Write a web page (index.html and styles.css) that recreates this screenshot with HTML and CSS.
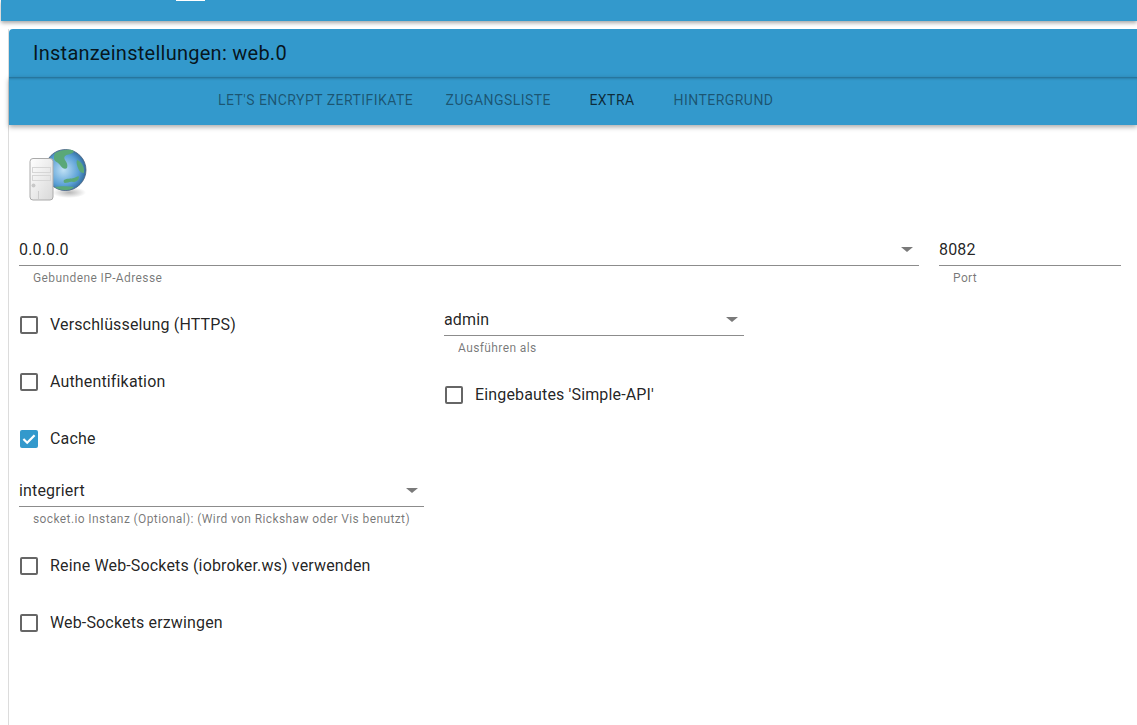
FILE: index.html
```html
<!DOCTYPE html>
<html lang="de">
<head>
<meta charset="utf-8">
<title>Instanzeinstellungen: web.0</title>
<link rel="stylesheet" href="styles.css">
</head>
<body>
<header class="topbar"><span class="topbar-mark"></span></header>
<main class="dialog">
  <div class="title">Instanzeinstellungen: web.0</div>
  <nav class="tabs">
    <span class="tab tab-a">LET'S ENCRYPT ZERTIFIKATE</span>
    <span class="tab tab-b">ZUGANGSLISTE</span>
    <span class="tab tab-c active">EXTRA</span>
    <span class="tab tab-d">HINTERGRUND</span>
  </nav>
  <section class="content">
    <svg class="logo" width="70" height="60" viewBox="0 0 70 60" aria-hidden="true">
      <defs>
        <radialGradient id="globe" cx="0.45" cy="0.5" r="0.58">
          <stop offset="0" stop-color="#bfe0f5"/>
          <stop offset="0.65" stop-color="#5aa0d6"/>
          <stop offset="1" stop-color="#2c6496"/>
        </radialGradient>
        <radialGradient id="shade" cx="0.5" cy="0.5" r="0.5">
          <stop offset="0" stop-color="#000" stop-opacity="0.28"/>
          <stop offset="1" stop-color="#000" stop-opacity="0"/>
        </radialGradient>
        <linearGradient id="case" x1="0" y1="0" x2="1" y2="1">
          <stop offset="0" stop-color="#ffffff"/>
          <stop offset="1" stop-color="#d8d8d8"/>
        </linearGradient>
      </defs>
      <ellipse cx="50" cy="45.500" rx="17" ry="5.500" fill="url(#shade)"/>
      <circle cx="46.500" cy="23" r="20.500" fill="url(#globe)" stroke="#47617e" stroke-width="0.8"/>
      <path d="M36 6c5-3 12-4 17-3 3 1 2 3-2 4-4 1-7 2-5 6 2 3 3 5 2 8-2 2-5 0-7-3-2-3-5-3-6-6 0-2 0-4 1-6z" fill="#5aa878"/>
      <path d="M58 13c3 1 6 4 7 9l0 4c-3 0-5-2-6-5-1-3-2-5-1-8zM45 33c3-2 7-1 10-2 2-1 5-3 5-1 0 3-3 5-6 5-3-1-5 1-8 1-1 0-2-2-1-3zM36 40c5-1 13-1 19 0-3 3-6 3-10 3-4 0-7-1-9-3z" fill="#5aa878"/>
      <rect x="11" y="11.500" width="23" height="41.500" rx="3" fill="url(#case)" stroke="#aaaaaa"/>
      <rect x="13.500" y="20.500" width="18" height="5" fill="none" stroke="#d6d6d6"/>
      <rect x="13.500" y="28.500" width="18" height="5" fill="none" stroke="#d6d6d6"/>
      <circle cx="14.500" cy="38.500" r="2" fill="#c8c8c8"/>
      <path d="M19.500 44v8" stroke="#cccccc"/>
    </svg>

    <div class="row-ip">
      <div class="field field-ip">
        <div class="input"><span>0.0.0.0</span><i class="caret"></i></div>
        <div class="hint">Gebundene IP-Adresse</div>
      </div>
      <div class="field field-port">
        <div class="input"><span>8082</span></div>
        <div class="hint">Port</div>
      </div>
    </div>

    <div class="columns">
      <div class="col-left">
        <label class="check"><i class="box"></i>Verschlüsselung (HTTPS)</label>
        <label class="check"><i class="box"></i>Authentifikation</label>
        <label class="check"><i class="box checked"><svg width="18" height="18" viewBox="0 0 18 18" aria-hidden="true"><path d="M3.400 9l3.800 3.800 7.400-7.600" fill="none" stroke="#fff" stroke-width="2.200"/></svg></i>Cache</label>
        <div class="field field-socket">
          <div class="input"><span>integriert</span><i class="caret"></i></div>
          <div class="hint">socket.io Instanz (Optional): (Wird von Rickshaw oder Vis benutzt)</div>
        </div>
        <label class="check"><i class="box"></i>Reine Web-Sockets (iobroker.ws) verwenden</label>
        <label class="check"><i class="box"></i>Web-Sockets erzwingen</label>
      </div>
      <div class="col-right">
        <div class="field field-admin">
          <div class="input"><span>admin</span><i class="caret"></i></div>
          <div class="hint">Ausführen als</div>
        </div>
        <label class="check"><i class="box"></i>Eingebautes 'Simple-API'</label>
      </div>
    </div>
  </section>
</main>
</body>
</html>
```

FILE: styles.css
```css
* { box-sizing: border-box; }
html, body { height: 100%; }
body {
  margin: 0;
  height: 725px;
  overflow: hidden;
  background: #fff;
  font-family: Roboto, "Liberation Sans", sans-serif;
  color: rgba(0, 0, 0, 0.87);
}
.topbar {
  height: 21px;
  margin-left: 1px;
  background: #3399cc;
  box-shadow: 0 2px 4px rgba(0, 0, 0, 0.35);
  position: relative;
  z-index: 3;
  display: flex;
  padding-left: 175px;
}
.topbar-mark {
  width: 29px;
  height: 1px;
  background: #fff;
}
.dialog {
  margin: 8px 0 0 8px;
  height: 696px;
  border-left: 1px solid #dcdcdc;
}
.title {
  height: 48px;
  background: #3399cc;
  border-top-left-radius: 4px;
  padding: 11px 0 0 24px;
  font-size: 20px;
  line-height: 26px;
  letter-spacing: 0.26px;
  color: rgba(0, 0, 0, 0.87);
}
.tabs {
  height: 48px;
  background: #3399cc;
  display: flex;
  align-items: center;
  padding-bottom: 2px;
  font-size: 14px;
  font-weight: 400;
  letter-spacing: 0.45px;
  box-shadow: inset 0 3px 3px -2px rgba(0, 0, 0, 0.35), 0 2px 5px rgba(0, 0, 0, 0.35);
  position: relative;
}
.tab { color: rgba(0, 0, 0, 0.46); white-space: nowrap; }
.tab.active { color: rgba(0, 0, 0, 0.72); }
.tab-a { margin-left: 209px; }
.tab-b { margin-left: 32.500px; }
.tab-c { margin-left: 38.500px; }
.tab-d { margin-left: 39px; }
.content { padding: 22px 16px 0 10px; }
.logo { display: block; }
.row-ip { display: flex; gap: 20px; margin-top: 27px; }
.field-ip { width: 900px; }
.field-port { width: 182px; }
.input {
  height: 32px;
  display: flex;
  align-items: center;
  justify-content: space-between;
  border-bottom: 1px solid #8c8c8c;
  font-size: 16px;
  letter-spacing: 0.15px;
  padding-right: 6px;
}
.hint {
  font-size: 12px;
  line-height: 14px;
  margin-top: 5px;
  padding-left: 14px;
  letter-spacing: 0.39px;
  color: rgba(0, 0, 0, 0.54);
  white-space: nowrap;
}
.caret {
  width: 0;
  height: 0;
  border-left: 6px solid transparent;
  border-right: 6px solid transparent;
  border-top: 5px solid #7a7a7a;
}
.columns { display: flex; margin-top: 11px; }
.col-left { width: 405px; margin-right: 20px; }
.col-right { width: 300px; }
.check {
  display: flex;
  align-items: center;
  height: 57px;
  font-size: 16px;
  letter-spacing: 0.15px;
}
.box {
  width: 18px;
  height: 18px;
  flex: none;
  margin: 0 12px 0 1px;
  border: 2px solid #666;
  border-radius: 2px;
}
.box.checked {
  border: 0;
  background: #3399cc;
  display: block;
}
.box svg { display: block; }
.field-socket { margin-top: 8px; margin-bottom: 11px; }
.field-admin { margin-top: 8px; margin-bottom: 11px; }
```
